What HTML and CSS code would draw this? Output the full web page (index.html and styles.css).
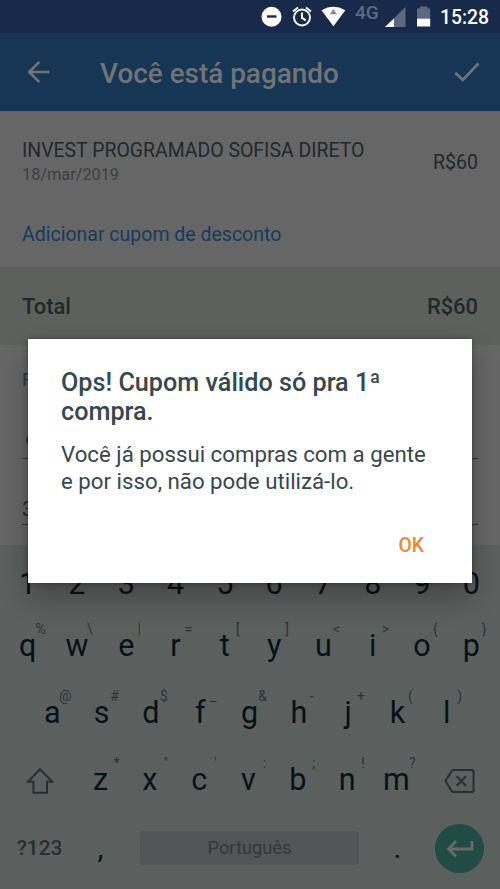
FILE: index.html
```html
<!DOCTYPE html>
<html lang="pt-BR">
<head>
<meta charset="utf-8">
<meta name="viewport" content="width=device-width, initial-scale=1">
<title>Você está pagando</title>
<link rel="stylesheet" href="styles.css">
</head>
<body>
<div class="screen">
  <header class="status">
    <svg class="status-icons" width="185" height="34" viewBox="0 0 185 34">
      <circle cx="11.5" cy="16.7" r="10" fill="#fff"/>
      <path d="M7 16.5h9.5" stroke="#182a49" stroke-width="2.4" fill="none"/>
      <g fill="none" stroke="#fff" stroke-width="1.9">
        <circle cx="42" cy="17.5" r="8"/>
        <path d="M42 12.5v5.4l3.7 2.5M33 11.5l5-4M51 11.5l-5-4"/>
      </g>
      <path d="M61.500 10.200Q73.200 3.500 85.300 10.200L73.400 26.300z" fill="#fff"/>
      <path d="M69.700 14.200l3.600-5.200 3.800 5.200z" fill="#858b96"/>
      <path d="M125 27L145.500 7v20z" fill="#5d6981"/>
      <path d="M125 27l9-8.500V27z" fill="#fff"/>
      <path d="M157 8.500h3.200V6.500h7.200v2h2.800V19H157z" fill="#5d6981"/>
      <path d="M157 18.700h13.200v7.800H157z" fill="#fff"/>
    </svg>
    <span class="network">4G</span>
    <time class="clock">15:28</time>
  </header>

  <nav class="appbar">
    <svg class="back" width="24" height="24" viewBox="0 0 24 24"><path d="M22.500 12H2.500M12.300 1.900L2.200 12l10.100 10.100"/></svg>
    <h1 class="appbar-title">Você está pagando</h1>
    <svg class="done" width="26" height="20" viewBox="0 0 26 20"><path d="M1.300 10.700l7.500 7.100L24.500 1.500"/></svg>
  </nav>

  <main class="order">
    <section class="item">
      <div>
        <div class="item-name">INVEST PROGRAMADO SOFISA DIRETO</div>
        <div class="item-date">18/mar/2019</div>
      </div>
      <div class="item-price">R$60</div>
    </section>
    <div class="coupon">Adicionar cupom de desconto</div>
    <section class="total"><span>Total</span><span>R$60</span></section>
    <section class="form">
      <div class="form-label">F</div>
      <div class="field field-coupon"><i class="dot"></i></div>
      <div class="field field-value">3</div>
    </section>
  </main>

  <section class="keyboard">
    <div class="row digits"><b>1</b><b>2</b><b>3</b><b>4</b><b>5</b><b>6</b><b>7</b><b>8</b><b>9</b><b>0</b></div>
    <div class="row"><b>q<i>%</i></b><b>w<i>\</i></b><b>e<i>|</i></b><b>r<i>=</i></b><b>t<i>[</i></b><b>y<i>]</i></b><b>u<i>&lt;</i></b><b>i<i>&gt;</i></b><b>o<i>{</i></b><b>p<i>}</i></b></div>
    <div class="row home"><b>a<i>@</i></b><b>s<i>#</i></b><b>d<i>$</i></b><b>f<i>_</i></b><b>g<i>&amp;</i></b><b>h<i>-</i></b><b>j<i>+</i></b><b>k<i>(</i></b><b>l<i>)</i></b></div>
    <div class="row lower">
      <svg class="shift" width="28" height="28" viewBox="0 0 28 28"><path d="M14 2.200L1.900 14.800h5.500v11h13.600v-11h5.500z"/></svg>
      <b>z<i>*</i></b><b>x<i>"</i></b><b>c<i>'</i></b><b>v<i>:</i></b><b>b<i>;</i></b><b>n<i>!</i></b><b>m<i>?</i></b>
      <svg class="erase" width="32" height="26" viewBox="0 0 32 26"><path d="M9.500 2h18.300q1.700 0 1.700 1.700v18.500q0 1.700-1.700 1.700H9.500q-1.300 0-2-1.200L1.500 13l6-9.800q.7-1.200 2-1.200z"/><path d="M12.600 8.300l9.400 9.400M22 8.300l-9.400 9.400"/></svg>
    </div>
    <div class="bottom">
      <span class="symbols">?123</span>
      <b class="comma">,</b>
      <span class="space">Português</span>
      <b class="period">.</b>
      <span class="enter"><svg width="28" height="20" viewBox="0 0 28 20"><path d="M26 3v8H2.500M10 3l-7.500 8 7.500 7.500"/></svg></span>
    </div>
  </section>

  <div class="dialog" role="dialog">
    <h2 class="dialog-title">Ops! Cupom válido só pra 1ª<br>compra.</h2>
    <p class="dialog-text">Você já possui compras com a gente<br>e por isso, não pode utilizá-lo.</p>
    <div class="dialog-action">OK</div>
  </div>
</div>
</body>
</html>
```
FILE: styles.css
```css
* { box-sizing: border-box; }
body { margin: 0; background: #666; font-family: Roboto, sans-serif; }
h1, h2, p { margin: 0; }
svg { display: block; fill: none; flex: none; }
i { font-style: normal; }
b { font-weight: 400; }

.screen { position: relative; width: 500px; height: 889px; overflow: hidden; display: flex; flex-direction: column; }

.status { position: relative; flex: none; height: 33px; background: #182a49; display: flex; padding-left: 260px; }
.network { position: absolute; left: 355px; top: 3px; font-size: 19px; line-height: 20px; font-weight: 500; color: #5d6981; }
.clock { position: absolute; right: 11px; top: 7px; font-size: 19.300px; line-height: 22px; font-weight: 500; color: #fff; }

.appbar { flex: none; height: 78px; background: #173554; display: flex; align-items: center; padding: 0 20px 0 27px; }
.back path, .done path { stroke: #707478; stroke-width: 2.600; }
.appbar-title { margin-left: 49px; flex: 1; font-size: 27.900px; line-height: 34px; font-weight: 500; color: #707478; padding-top: 4px; white-space: nowrap; }

.order { flex: none; height: 434px; color: #1f292c; }
.item { display: flex; justify-content: space-between; align-items: center; height: 101px; padding: 2px 22px 0; }
.item-name { font-size: 19.450px; line-height: 24px; white-space: nowrap; }
.item-date { font-size: 16.300px; line-height: 24px; color: #394144; }
.item-price { font-size: 19.500px; line-height: 24px; }
.coupon { height: 55px; padding: 10px 22px 0; font-size: 19.500px; line-height: 26px; color: #183a5d; }
.total { height: 78px; background: #5d605d; display: flex; align-items: center; justify-content: space-between; padding: 0 22px; font-size: 21.900px; font-weight: 500; }
.form { padding: 24px 22px 0; font-size: 20px; }
.form-label { height: 22px; line-height: 22px; font-size: 18px; color: #2d3740; }
.field { border-bottom: 1px solid #333; display: flex; align-items: flex-end; line-height: 24px; padding-bottom: 3px; }
.field-coupon { height: 68px; padding: 0 0 12px 4px; }
.dot { width: 12px; height: 12px; border-radius: 50%; background: #641d25; }
.field-value { height: 66px; }

.keyboard { flex: 1; background: #5b5f5e; padding: 11px 4px 0 3px; color: #071218; }
.row { display: grid; grid-template-columns: repeat(10, 1fr); height: 67px; align-items: center; font-size: 30.500px; line-height: 36px; text-align: center; }
.row b { position: relative; }
.row i { position: absolute; left: calc(50% + 1px); top: -8px; width: 24px; font-size: 14px; line-height: 18px; color: #2d3335; }
.digits { height: 56px; }
.home { grid-template-columns: repeat(9, 1fr); padding: 0 24.700px; }
.lower { grid-template-columns: 1.480fr repeat(7, 1fr) 1.520fr; }
.lower i { left: calc(50% + 4px); }
.shift, .erase { justify-self: center; stroke: #292e30; stroke-width: 2; }
.erase { margin: 3px 0 0 2px; }
.shift { margin: 2px 0 0 1px; }
.bottom { display: flex; align-items: center; height: 70px; }
.symbols { width: 73px; text-align: center; font-size: 20.800px; font-weight: 500; color: #292e30; }
.comma, .period { width: 49px; text-align: center; font-size: 30px; line-height: 36px; }
.space { width: 219px; height: 34px; margin: 0 14px 0 15px; border-radius: 4px; background: #525456; color: #33383a; text-align: center; font-size: 18.300px; line-height: 34px; }
.enter { width: 49px; height: 49px; flex: none; margin-left: 13px; border-radius: 50%; background: #214b45; display: grid; place-items: center; }
.enter path { stroke: #666b6a; stroke-width: 2.800; }

.dialog { position: absolute; left: 28px; top: 339px; width: 444px; height: 243.500px; padding: 29px 34px 0 33px; background: #fff; color: #37474f; box-shadow: 0 14px 26px rgba(0,0,0,.27), 0 0 5px rgba(0,0,0,.3); }
.dialog-title { font-size: 25.200px; line-height: 29px; font-weight: 500; white-space: nowrap; }
.dialog-text { margin-top: 15px; font-size: 22.250px; line-height: 26.600px; white-space: nowrap; }
.dialog-action { margin: 39.500px 14px 0 0; text-align: right; font-size: 19.300px; line-height: 24px; font-weight: 500; color: #f08636; }
```
